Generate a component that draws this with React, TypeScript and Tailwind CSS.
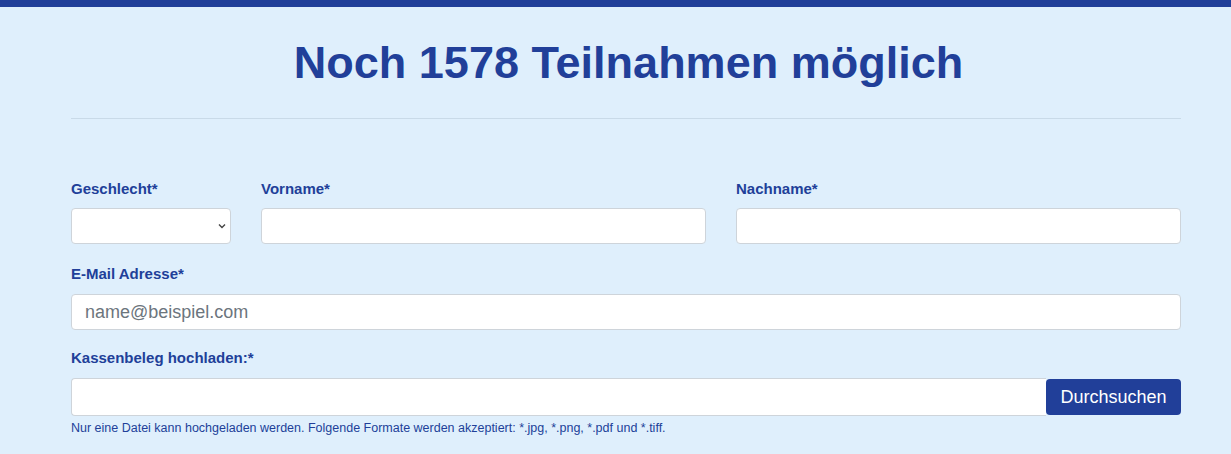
export default function App() {
  return (
    <div className="min-h-[454px] bg-[#dfeffc] font-['Liberation_Sans',Arial,sans-serif]">
      <div className="h-[7px] bg-[#213f99]"></div>

      <div className="pl-[71px] pr-[50px]">
        <h1 className="pl-[5px] pt-[28px] text-center text-[45px] font-bold leading-[56px] text-[#213f99]">
          Noch 1578 Teilnahmen möglich
        </h1>
        <hr className="mt-[27px] border-t border-[#c9dae8]" />

        <form className="pt-[60px]">
          <div className="grid grid-cols-[160px_1fr_1fr] gap-x-[30px]">
            <div>
              <label className="block text-[15px] font-bold leading-[20px] text-[#213f99]">Geschlecht*</label>
              <div className="relative mt-[9px]">
                <select className="h-[36px] w-full appearance-none rounded-[4px] border border-[#ced4da] bg-white px-3 text-[16px]">
                  <option></option>
                </select>
                <svg
                  className="pointer-events-none absolute right-[4px] top-[14px] h-[8px] w-[10px]"
                  viewBox="0 0 10 8"
                  fill="none"
                  stroke="#444"
                  strokeWidth="1.4"
                >
                  <path d="M2 2.5l3 3 3-3" />
                </svg>
              </div>
            </div>
            <div>
              <label className="block text-[15px] font-bold leading-[20px] text-[#213f99]">Vorname*</label>
              <input className="mt-[9px] h-[36px] w-full rounded-[4px] border border-[#ced4da] bg-white px-3 text-[18px]" />
            </div>
            <div>
              <label className="block text-[15px] font-bold leading-[20px] text-[#213f99]">Nachname*</label>
              <input className="mt-[9px] h-[36px] w-full rounded-[4px] border border-[#ced4da] bg-white px-3 text-[18px]" />
            </div>
          </div>

          <div className="mt-[20px]">
            <label className="block text-[15px] font-bold leading-[20px] text-[#213f99]">E-Mail Adresse*</label>
            <input
              placeholder="name@beispiel.com"
              className="mt-[10px] h-[36px] w-full rounded-[4px] border border-[#ced4da] bg-white px-[13px] text-[18px] placeholder:text-[#6c757d]"
            />
          </div>

          <div className="mt-[18px]">
            <label className="block text-[15px] font-bold leading-[20px] text-[#213f99]">Kassenbeleg hochladen:*</label>
            <div className="mt-[10px] flex h-[38px] items-stretch">
              <div className="flex-1 rounded-l-[4px] border border-r-0 border-[#ced4da] bg-white"></div>
              <button
                type="button"
                className="my-px w-[135px] rounded-[4px] bg-[#213f99] text-[18px] text-white"
              >
                Durchsuchen
              </button>
            </div>
            <p className="mt-[4px] text-[12.5px] leading-[16px] text-[#213f99]">
              Nur eine Datei kann hochgeladen werden. Folgende Formate werden akzeptiert: *.jpg, *.png, *.pdf und *.tiff.
            </p>
          </div>
        </form>
      </div>
    </div>
  );
}
